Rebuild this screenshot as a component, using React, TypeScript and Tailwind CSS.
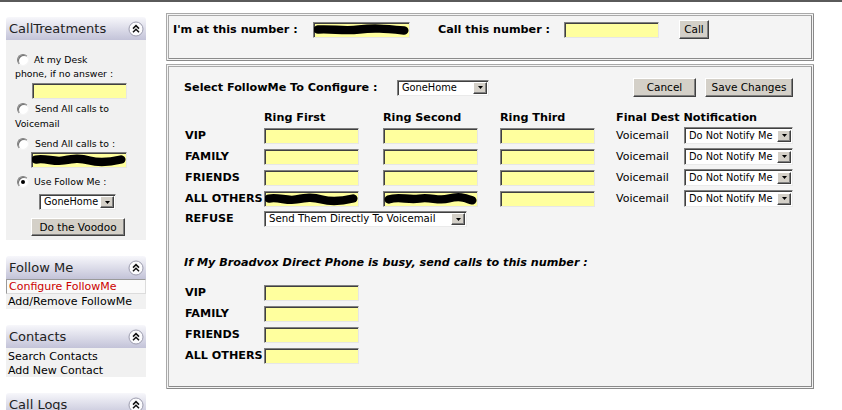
import React from "react";

const Chevron = () => (
  <svg width="16" height="16" viewBox="0 0 16 16" className="shrink-0">
    <circle cx="8" cy="8" r="7" fill="#fbfbfd" stroke="#9c9cae" strokeWidth="1" />
    <path d="M5 7.6 L8 4.6 L11 7.6 M5 11.2 L8 8.2 L11 11.2" fill="none" stroke="#111" strokeWidth="1.5" />
  </svg>
);

const Scribble = ({ d }: { d: string }) => (
  <svg className="absolute inset-0 h-full w-full" viewBox="0 0 95 15" preserveAspectRatio="none">
    <path d={d} fill="none" stroke="#000" strokeWidth="9" strokeLinecap="round" strokeLinejoin="round" />
  </svg>
);

function Field({ className = "", scribble }: { className?: string; scribble?: string }) {
  return (
    <div
      className={`relative h-[16px] shrink-0 border border-t-[#808080] border-l-[#808080] border-b-[#e6e6e6] border-r-[#e6e6e6] bg-[#ffff9e] shadow-[inset_1px_1px_0_#404040] ${className}`}
    >
      {scribble && <Scribble d={scribble} />}
    </div>
  );
}

function Select({ value, className = "", textClass = "text-[9.8px]" }: { value: string; className?: string; textClass?: string }) {
  return (
    <div
      className={`flex shrink-0 items-center border border-t-[#808080] border-l-[#808080] border-b-[#eaeaea] border-r-[#eaeaea] bg-white shadow-[inset_1px_1px_0_#404040] ${className}`}
    >
      <span className={`flex-1 truncate pl-[4px] leading-none text-black ${textClass}`}>{value}</span>
      <span className="mr-[1px] flex h-[12px] w-[14px] items-center justify-center border border-t-white border-l-white border-b-[#404040] border-r-[#404040] bg-[#d4d0c8] shadow-[inset_-1px_-1px_0_#808080]">
        <svg width="5" height="3" viewBox="0 0 5 3">
          <path d="M0 0h5L2.5 3z" fill="#000" />
        </svg>
      </span>
    </div>
  );
}

function Button({ label, className = "" }: { label: string; className?: string }) {
  return (
    <div
      className={`flex shrink-0 items-center justify-center border border-t-white border-l-white border-b-[#404040] border-r-[#404040] bg-[#d4d0c8] text-[10.5px] leading-none text-black shadow-[inset_-1px_-1px_0_#808080] ${className}`}
    >
      {label}
    </div>
  );
}

function Radio({ checked = false }: { checked?: boolean }) {
  return (
    <span className="inline-flex h-[12px] w-[12px] shrink-0 items-center justify-center rounded-full border border-t-[#808080] border-l-[#808080] border-b-[#f4f4f4] border-r-[#f4f4f4] bg-white shadow-[inset_1px_1px_0_#707070]">
      {checked && <span className="h-[4px] w-[4px] rounded-full bg-black" />}
    </span>
  );
}

function PanelHeader({ title }: { title: string }) {
  return (
    <div className="flex h-[23px] items-center justify-between rounded-t-[3px] bg-linear-to-b from-[#f7f7fb] to-[#c3c3d8] pl-[3px] pr-[2px] text-[13px] leading-none text-[#222]">
      <span>{title}</span>
      <Chevron />
    </div>
  );
}

const Label = ({ children }: { children: React.ReactNode }) => (
  <span className="text-[11.2px] font-bold leading-none text-black">{children}</span>
);

const Cell = ({ children, className = "" }: { children?: React.ReactNode; className?: string }) => (
  <div className={`flex h-[17px] items-center ${className}`}>{children}</div>
);

const groups = ["VIP", "FAMILY", "FRIENDS", "ALL OTHERS"];

const scribA = "M4 7 C 14 5, 22 10, 32 8 S 48 5, 58 8 S 78 10, 90 7";
const scribB = "M5 8 C 15 4, 24 9, 36 7 S 55 10, 66 7 S 82 6, 90 9";

export default function App() {
  return (
    <div className="min-h-[410px] w-[842px] bg-white font-['DejaVu_Sans',sans-serif] leading-none text-black">
      <div className="h-[2px] w-full bg-[#5a5a5a]" />
      <div className="flex">
        {/* Sidebar */}
        <aside className="ml-[6px] mt-[15px] flex w-[140px] flex-col">
          <PanelHeader title="CallTreatments" />
          <div className="h-[200px] bg-[#f1f1f1] pl-[9px] pt-[13px] text-[9.3px] leading-none">
            <div className="flex h-[14px] items-center">
              <span className="ml-[2px] flex"><Radio /></span>
              <span className="ml-[5px]">At my Desk</span>
            </div>
            <div className="flex h-[14px] items-center">phone, if no answer :</div>
            <Field className="ml-[17px] mt-[2px] w-[95px]" />
            <div className="mt-[2px] flex h-[15px] items-center">
              <span className="ml-[2px] flex"><Radio /></span>
              <span className="ml-[6px]">Send All calls to</span>
            </div>
            <div className="flex h-[15px] items-center">Voicemail</div>
            <div className="mt-[5px] flex h-[15px] items-center">
              <span className="ml-[2px] flex"><Radio /></span>
              <span className="ml-[6px]">Send All calls to :</span>
            </div>
            <Field className="ml-[16px] mt-[1px] w-[96px]" scribble={scribA} />
            <div className="mt-[6px] flex h-[15px] items-center">
              <span className="ml-[2px] flex"><Radio checked /></span>
              <span className="ml-[5px]">Use Follow Me :</span>
            </div>
            <Select value="GoneHome" className="ml-[24px] mt-[5px] h-[16px] w-[77px]" textClass="text-[9.7px]" />
            <Button label="Do the Voodoo" className="ml-[16px] mt-[8px] h-[18px] w-[94px] text-[9.3px]" />
          </div>

          <div className="mt-[16px]">
            <PanelHeader title="Follow Me" />
            <div className="h-[30px] bg-[#f1f1f1] text-[11px] leading-none">
              <div className="flex h-[15px] items-center border border-t-[#9a9a9a] border-l-[#9a9a9a] border-b-[#dcdcdc] border-r-[#dcdcdc] bg-[#fafafa] pl-[2px] text-[#cc0000]">
                Configure FollowMe
              </div>
              <div className="flex h-[14px] items-center pl-[2px]">Add/Remove FollowMe</div>
            </div>
          </div>

          <div className="mt-[16px]">
            <PanelHeader title="Contacts" />
            <div className="h-[29px] bg-[#f1f1f1] pt-[1px] text-[11px] leading-none">
              <div className="flex h-[14px] items-center pl-[2px]">Search Contacts</div>
              <div className="flex h-[14px] items-center pl-[2px]">Add New Contact</div>
            </div>
          </div>

          <div className="mt-[16px]">
            <PanelHeader title="Call Logs" />
          </div>
        </aside>

        {/* Main */}
        <main className="ml-[20px] mt-[11px] flex w-[648px] flex-col">
          <section className="h-[48px] border-[3px] border-double border-t-[#a9a9a9] border-l-[#a9a9a9] border-b-[#8a8a8a] border-r-[#8a8a8a] bg-[#f4f4f4] pl-[4px] pt-[4px]">
            <div className="flex h-[19px] items-center">
              <div className="flex w-[140px]"><Label>I'm at this number :</Label></div>
              <Field className="w-[97px]" scribble="M4 7 C 18 6, 30 9, 45 7 S 70 6, 90 8" />
              <div className="ml-[28px] flex w-[126px]"><Label>Call this number :</Label></div>
              <Field className="w-[95px]" />
              <Button label="Call" className="ml-[20px] h-[19px] w-[30px]" />
            </div>
          </section>

          <section className="mt-[3px] h-[325px] border-[3px] border-double border-t-[#a9a9a9] border-l-[#a9a9a9] border-b-[#8a8a8a] border-r-[#8a8a8a] bg-[#f4f4f4] pl-[15px] pt-[11px]">
            <div className="flex h-[19px] w-[609px] items-center">
              <div className="flex w-[213px]"><Label>Select FollowMe To Configure :</Label></div>
              <Select value="GoneHome" className="h-[16px] w-[92px]" />
              <Button label="Cancel" className="ml-auto h-[19px] w-[63px]" />
              <Button label="Save Changes" className="ml-[9px] h-[19px] w-[88px]" />
            </div>

            <div className="mt-[14px] grid grid-cols-[80px_119px_117px_116px_68px_109px]">
              <div className="h-[14px]" />
              <div className="flex h-[14px] items-center"><Label>Ring First</Label></div>
              <div className="flex h-[14px] items-center"><Label>Ring Second</Label></div>
              <div className="flex h-[14px] items-center"><Label>Ring Third</Label></div>
              <div className="col-span-2 flex h-[14px] items-center"><Label>Final Dest Notification</Label></div>
            </div>

            <div className="mt-[2px] grid grid-cols-[80px_119px_117px_116px_68px_109px] items-center gap-y-[4px]">
              {groups.map((g) => (
                <React.Fragment key={g}>
                  <Cell className="pl-[1px]">
                    <Label>{g}</Label>
                  </Cell>
                  <Field className="w-[95px]" scribble={g === "ALL OTHERS" ? scribA : undefined} />
                  <Field className="w-[95px]" scribble={g === "ALL OTHERS" ? scribB : undefined} />
                  <Field className="w-[95px]" />
                  <Cell className="text-[11px]">Voicemail</Cell>
                  <Select value="Do Not Notify Me" className="h-[17px] w-[109px]" />
                </React.Fragment>
              ))}
            </div>

            <div className="mt-[4px] flex h-[16px] items-center">
              <div className="flex w-[80px] pl-[1px]">
                <Label>REFUSE</Label>
              </div>
              <Select value="Send Them Directly To Voicemail" className="h-[16px] w-[203px]" textClass="text-[10.2px]" />
            </div>

            <div className="mt-[29px] flex h-[14px] items-center">
              <span className="text-[11.2px] font-bold italic leading-none">
                If My Broadvox Direct Phone is busy, send calls to this number :
              </span>
            </div>

            <div className="mt-[15px] grid grid-cols-[80px_95px] gap-y-[5px]">
              {groups.map((g) => (
                <React.Fragment key={g}>
                  <div className="flex h-[16px] items-center pl-[1px]">
                    <Label>{g}</Label>
                  </div>
                  <Field className="w-[95px]" />
                </React.Fragment>
              ))}
            </div>
          </section>
        </main>
      </div>
    </div>
  );
}
